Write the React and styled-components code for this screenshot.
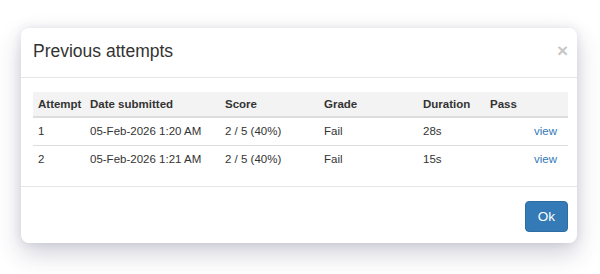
import React from "react";
import styled, { createGlobalStyle } from "styled-components";

const Global = createGlobalStyle`
  html, body { margin: 0; padding: 0; background: #ffffff; }
  *, *::before, *::after { box-sizing: border-box; }
  body { font-family: "Liberation Sans", Arial, Helvetica, sans-serif; color: #333333; }
`;

const Page = styled.div`
  padding: 28px 0 31px 21px;
  min-height: 274px;
`;

const Modal = styled.div`
  width: 556px;
  background: #ffffff;
  border-radius: 8px;
  box-shadow: 0 10px 24px rgba(50, 50, 90, 0.24), 0 0 9px rgba(50, 50, 90, 0.1);
  overflow: hidden;
`;

const Header = styled.div`
  display: flex;
  align-items: center;
  justify-content: space-between;
  padding: 11px 9px 13px 12px;
  border-bottom: 1px solid #e5e5e5;
`;

const Title = styled.h4`
  margin: 0;
  font-size: 17.5px;
  line-height: 25px;
  font-weight: 400;
  color: #333333;
`;

const Close = styled.button`
  border: 0;
  background: transparent;
  padding: 0;
  margin: -2px 0 0 0;
  font-family: "Liberation Sans", Arial, sans-serif;
  font-size: 19px;
  font-weight: 700;
  line-height: 1;
  color: #000000;
  opacity: 0.22;
  cursor: pointer;
`;

const Body = styled.div`
  padding: 14px 9px 13px 12px;
`;

const Table = styled.table`
  width: 535px;
  border-collapse: collapse;
  table-layout: fixed;
  font-size: 11.5px;
`;

const Th = styled.th`
  width: ${(p) => p.$w}px;
  text-align: left;
  font-weight: 700;
  padding: 4px 0 4px 5px;
  line-height: 16px;
  background: #f3f3f3;
  border-bottom: 2px solid #dddddd;
  color: #333333;
  white-space: nowrap;
`;

const Tr = styled.tr`
  & + & td {
    border-top: 1px solid #dddddd;
  }
`;

const Td = styled.td`
  padding: 5px ${(p) => (p.$right ? "11px" : "0")} 5px 5px;
  line-height: 17px;
  text-align: ${(p) => (p.$right ? "right" : "left")};
  white-space: nowrap;
`;

const Link = styled.a`
  color: #337ab7;
  text-decoration: none;
`;

const Footer = styled.div`
  display: flex;
  justify-content: flex-end;
  padding: 14px 9px 11px 12px;
  border-top: 1px solid #e5e5e5;
`;

const Button = styled.button`
  height: 31px;
  width: 43px;
  padding: 0;
  border: 1px solid #2e6da4;
  border-radius: 4px;
  background: #337ab7;
  color: #ffffff;
  font-family: "Liberation Sans", Arial, sans-serif;
  font-size: 13.5px;
  cursor: pointer;
`;

const cols = [
  { label: "Attempt", w: 52 },
  { label: "Date submitted", w: 135 },
  { label: "Score", w: 99 },
  { label: "Grade", w: 99 },
  { label: "Duration", w: 67 },
  { label: "Pass", w: 40 },
  { label: "", w: 43 },
];

const rows = [
  { n: "1", date: "05-Feb-2026 1:20 AM", score: "2 / 5 (40%)", grade: "Fail", dur: "28s" },
  { n: "2", date: "05-Feb-2026 1:21 AM", score: "2 / 5 (40%)", grade: "Fail", dur: "15s" },
];

export default function App() {
  return (
    <>
      <Global />
      <Page>
        <Modal>
          <Header>
            <Title>Previous attempts</Title>
            <Close aria-label="Close">×</Close>
          </Header>
          <Body>
            <Table>
              <thead>
                <tr>
                  {cols.map((c, i) => (
                    <Th key={i} $w={c.w}>{c.label}</Th>
                  ))}
                </tr>
              </thead>
              <tbody>
                {rows.map((r) => (
                  <Tr key={r.n}>
                    <Td>{r.n}</Td>
                    <Td>{r.date}</Td>
                    <Td>{r.score}</Td>
                    <Td>{r.grade}</Td>
                    <Td>{r.dur}</Td>
                    <Td></Td>
                    <Td $right>
                      <Link href="#">view</Link>
                    </Td>
                  </Tr>
                ))}
              </tbody>
            </Table>
          </Body>
          <Footer>
            <Button>Ok</Button>
          </Footer>
        </Modal>
      </Page>
    </>
  );
}
